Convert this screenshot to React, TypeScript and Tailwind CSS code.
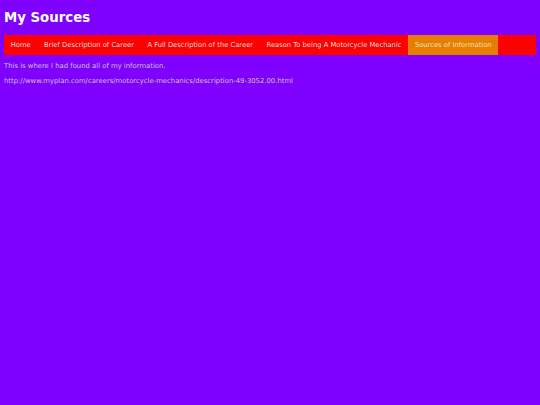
const LINKS = [
  { label: 'Home', active: false },
  { label: 'Brief Description of Career', active: false },
  { label: 'A Full Description of the Career', active: false },
  { label: 'Reason To being A Motorcycle Mechanic', active: false },
  { label: 'Sources of Information', active: true },
];

export default function App() {
  return (
    <div className="min-h-screen bg-[#8000ff] px-[4px] pt-[1px] font-['Verdana','DejaVu_Sans',sans-serif]">
      <h1 className="mt-[8px] text-[13.3px] font-bold leading-[18px] text-white">My Sources</h1>

      {/* Nav bar */}
      <nav className="mt-[8px] flex h-[20px] items-stretch bg-[#ff0000]">
        {LINKS.map((l) => (
          <a
            key={l.label}
            href="#"
            className={`flex items-center px-[6.7px] pt-[1px] text-[6.78px] ${
              l.active ? 'bg-[#e67e00] text-[#f3e2c6]' : 'text-[#f4dede]'
            }`}
          >
            {l.label}
          </a>
        ))}
      </nav>

      <p className="mt-[4px] text-[6.85px] leading-[15px] text-[#c9c3cf]">This is where I had found all of my information.</p>
      <p className="text-[6.85px] leading-[15px] text-[#c9c3cf]">
        http://www.myplan.com/careers/motorcycle-mechanics/description-49-3052.00.html
      </p>
    </div>
  );
}
